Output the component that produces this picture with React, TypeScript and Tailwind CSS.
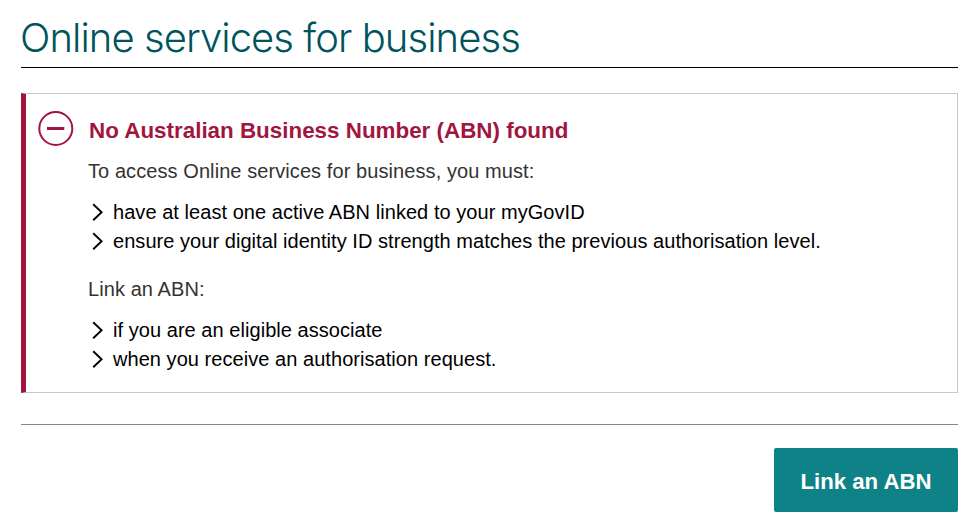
const accessRequirements = [
  "have at least one active ABN linked to your myGovID",
  "ensure your digital identity ID strength matches the previous authorisation level.",
];

const linkReasons = [
  "if you are an eligible associate",
  "when you receive an authorisation request.",
];

function ChevronList({ items }: { items: string[] }) {
  return (
    <ul className="text-[20px] leading-[29px] tracking-[0.05px] text-black">
      {items.map((item) => (
        <li key={item} className="flex items-start">
          <svg className="mt-[5px] mr-2 ml-1 h-[18px] w-[13px] shrink-0" viewBox="0 0 13 18" fill="none" stroke="#000" strokeWidth="1.9">
            <path d="M1.2 1.2l8.4 8-8.4 8" />
          </svg>
          <span className="whitespace-nowrap">{item}</span>
        </li>
      ))}
    </ul>
  );
}

export default function App() {
  return (
    <main className="h-[521px] w-[966px] bg-white pt-2 pr-2 pl-[21px] font-['Liberation_Sans',Arial,sans-serif]">
      <h1 className="-indent-px h-[60px] border-b border-black font-['Inter','Liberation_Sans',sans-serif] text-[40px] leading-[60px] font-light tracking-[-0.94px] whitespace-nowrap text-[#00545b]">
        Online services for business
      </h1>

      <section className="mt-[25px] flex h-[300px] border border-l-[5px] border-[#c8c8c8] border-l-[#a1163e]">
        <svg className="mt-4 ml-3 size-9 shrink-0" viewBox="0 0 36 36" fill="none" stroke="#a1163e" strokeWidth="2">
          <circle cx="17.8" cy="18.5" r="16.5" />
          <path d="M9 18.5h17.3" strokeWidth="3" />
        </svg>
        <div className="ml-[14px] pt-[22px]">
          <h2 className="pl-px text-[22.4px] leading-[30px] font-bold whitespace-nowrap text-[#a1163e]">
            No Australian Business Number (ABN) found
          </h2>
          <p className="mt-[11px] mb-3 text-[20px] leading-[29px] tracking-[0.08px] text-[#333]">
            To access Online services for business, you must:
          </p>
          <ChevronList items={accessRequirements} />
          <p className="mt-[19px] mb-3 text-[20px] leading-[29px] tracking-[0.08px] text-[#333]">Link an ABN:</p>
          <ChevronList items={linkReasons} />
        </div>
      </section>

      <footer className="mt-[31px] flex justify-end border-t border-[#888] pt-[23px]">
        <button className="h-16 w-[184px] rounded-[2px] bg-[#0f8287] pt-[3px] text-[22.2px] font-bold text-white">
          Link an ABN
        </button>
      </footer>
    </main>
  );
}
